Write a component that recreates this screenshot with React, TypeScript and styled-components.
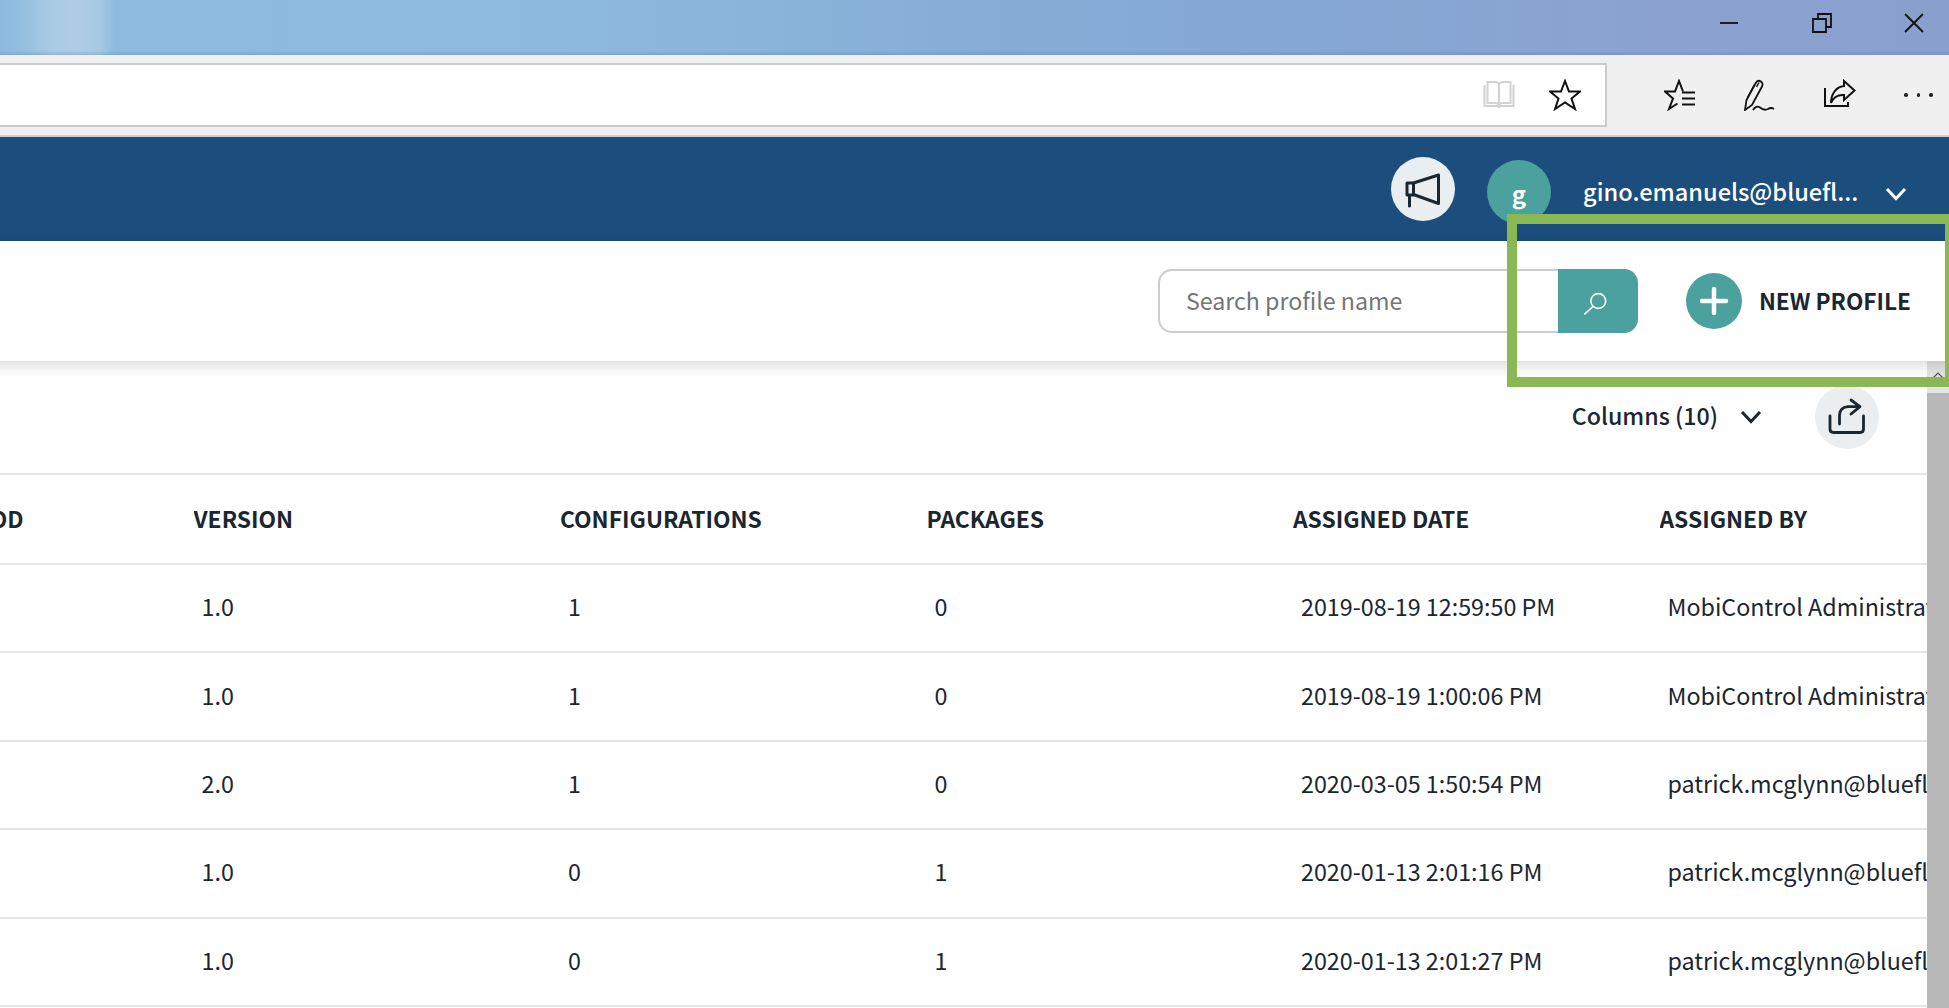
import styled, {createGlobalStyle} from "styled-components";

const GlobalStyle = createGlobalStyle`
  html, body {
    margin: 0;
    padding: 0;
    background: #fff;
    overflow: hidden;
  }
  * {
    box-sizing: border-box;
  }
`

const Page = styled.div`
  position: relative;
  width: 1949px;
  height: 1008px;
  display: flex;
  flex-direction: column;
  overflow: hidden;
  font-family: "Noto Sans CJK SC", "Noto Sans", sans-serif;
  color: #1a2630;
`

const TitleBar = styled.div`
  height: 55px;
  flex: none;
  display: flex;
  justify-content: flex-end;
  align-items: flex-start;
  gap: 72px;
  padding: 13px 25px 0 0;
  background:
    linear-gradient(180deg, rgba(255,255,255,0) 92%, rgba(70,110,160,.25) 100%),
    linear-gradient(90deg, #8dbbdd 0, #93bfdf 23px, #a9cbe4 50px, #aecde5 78px, #a6c9e3 100px, #8cbbde 114px, #8db9dc 600px, #86acd6 1000px, #85a8d4 1300px, #8ba2d0 1650px, #899fce 1949px);
`

const WindowIcon = styled.svg`
  width: 20px;
  height: 20px;
  fill: none;
  stroke: #111;
  stroke-width: 1.8;
`

const Toolbar = styled.div`
  height: 82px;
  flex: none;
  display: flex;
  background: #f0f0f0;
  border-bottom: 2px solid #cfcfcf;
  padding-top: 8px;
`

const AddressBar = styled.div`
  width: 1607px;
  height: 64px;
  flex: none;
  display: flex;
  justify-content: flex-end;
  align-items: center;
  gap: 34px;
  padding-right: 24px;
  background: #fff;
  border: 2px solid #cbcbcb;
  border-left: none;
`

const ToolIcon = styled.svg<{$gray?: boolean}>`
  width: 32px;
  height: 32px;
  flex: none;
  fill: none;
  stroke: ${(props) => (props.$gray ? "#d2d2d2" : "#111")};
  stroke-width: 2;
`

const ToolGroup = styled.div`
  display: flex;
  align-items: center;
  height: 64px;
  margin-left: 57px;
  gap: 48px;
`

const Dots = styled.div`
  display: flex;
  gap: 9px;

  span {
    width: 3.5px;
    height: 3.5px;
    background: #222;
    border-radius: 50%;
  }
`

const TopNav = styled.div`
  height: 104px;
  flex: none;
  display: flex;
  justify-content: flex-end;
  align-items: center;
  padding: 6px 42px 0 0;
  background: #1c4e7d;
`

const Megaphone = styled.div`
  width: 64px;
  height: 64px;
  border-radius: 50%;
  background: #ebeef0;
  margin-top: -6px;
`

const Avatar = styled.div`
  width: 64px;
  height: 64px;
  margin-left: 32px;
  padding-top: 2px;
  border-radius: 50%;
  background: #4aa19e;
  color: #fff;
  font-size: 24px;
  font-weight: 700;
  display: flex;
  align-items: center;
  justify-content: center;
`

const UserName = styled.div`
  width: 274px;
  margin: -2px 0 0 32px;
  white-space: nowrap;
  color: #fff;
  font-size: 23.6px;
  font-weight: 500;
`

const Chevron = styled.svg<{$light?: boolean}>`
  width: 22px;
  height: 14px;
  flex: none;
  fill: none;
  stroke: ${(props) => (props.$light ? "#fff" : "#1a2630")};
  stroke-width: 3;
`

const NavChevron = styled(Chevron)`
  margin: 4px 0 0 28px;
`

const SubHeader = styled.div`
  position: relative;
  z-index: 1;
  height: 120px;
  flex: none;
  display: flex;
  justify-content: flex-end;
  align-items: center;
  margin: 0 -20px;
  padding-right: 58px;
  background: #fff;
  box-shadow: 0 4px 14px rgba(0, 0, 0, .16);
`

const SearchInput = styled.input`
  width: 400px;
  height: 64px;
  padding: 0 26px 2px;
  border: 2px solid #cdcdcd;
  border-right: none;
  border-radius: 14px 0 0 14px;
  outline: none;
  font: 400 23.2px "Noto Sans CJK SC", "Noto Sans", sans-serif;
  color: #1a2630;

  &::placeholder {
    color: #757575;
    opacity: 1;
  }
`

const SearchButton = styled.div`
  width: 80px;
  height: 64px;
  display: flex;
  align-items: center;
  justify-content: center;
  background: #4aa19e;
  border-radius: 0 14px 14px 0;
`

const NewButton = styled.div`
  display: flex;
  align-items: center;
  margin-left: 48px;
  gap: 17px;
  font-size: 22.6px;
  font-weight: 600;
  white-space: nowrap;
`

const NewLabel = styled.span`
  margin-bottom: 2px;
`

const PlusCircle = styled.div`
  width: 56px;
  height: 56px;
  border-radius: 50%;
  background: #4aa19e;
  display: flex;
  align-items: center;
  justify-content: center;
`

const Body = styled.div`
  flex: 1;
  display: flex;
  min-height: 0;
`

const Main = styled.div`
  flex: 1;
  min-width: 0;
  overflow: hidden;
`

const ColumnsBar = styled.div`
  height: 112px;
  display: flex;
  justify-content: flex-end;
  align-items: center;
  padding-right: 48px;
  font-size: 23.2px;
  font-weight: 500;
`

const ColumnsLabel = styled.div`
  display: flex;
  align-items: center;
  gap: 22px;
  margin-right: 53px;
`

const ColumnsText = styled.span`
  margin-bottom: 4px;
`

const ExportButton = styled.div`
  width: 64px;
  height: 64px;
  border-radius: 50%;
  background: #ebeef0;
`

const Table = styled.div`
  width: 2566px;
  margin-left: -173px;
  border-top: 2px solid #e3e7ea;
`

const Row = styled.div<{$head?: boolean}>`
  display: grid;
  grid-template-columns: repeat(7, 366.5px);
  align-items: center;
  height: ${(props) => (props.$head ? "90px" : "88.4px")};
  border-bottom: 2px solid #e3e7ea;
`

const HeadCell = styled.div`
  padding-bottom: 1px;
  font-size: 22.8px;
  font-weight: 600;
  white-space: nowrap;
  overflow: hidden;
`

const Cell = styled.div`
  padding: 0 0 4px 8px;
  font-size: 23.3px;
  white-space: nowrap;
  overflow: hidden;
`

const Scrollbar = styled.div`
  width: 22px;
  flex: none;
  display: flex;
  flex-direction: column;
  background: #b8b8b8;
`

const ScrollUp = styled.div`
  height: 32px;
  display: flex;
  align-items: flex-end;
  justify-content: center;
  padding-bottom: 14px;
  background: #e4e4e4;
`

const GreenFrame = styled.div`
  position: absolute;
  z-index: 2;
  left: 1507px;
  top: 214px;
  width: 442px;
  height: 173px;
  border: solid #8ab855;
  border-width: 10px 4px 10px 10px;
  pointer-events: none;
`

const columns = ["INSTALL METHOD", "VERSION", "CONFIGURATIONS", "PACKAGES", "ASSIGNED DATE", "ASSIGNED BY"];

const rows = [
	["1.0", "1", "0", "2019-08-19 12:59:50 PM", "MobiControl Administrator"],
	["1.0", "1", "0", "2019-08-19 1:00:06 PM", "MobiControl Administrator"],
	["2.0", "1", "0", "2020-03-05 1:50:54 PM", "patrick.mcglynn@bluefletch.com"],
	["1.0", "0", "1", "2020-01-13 2:01:16 PM", "patrick.mcglynn@bluefletch.com"],
	["1.0", "0", "1", "2020-01-13 2:01:27 PM", "patrick.mcglynn@bluefletch.com"],
];

const starPoints = "16,2 20,12.5 31,12.5 22.5,19.5 26,30 16,23.5 6,30 9.5,19.5 1,12.5 12,12.5";

export default function App() {
	return (
		<Page>
			<GlobalStyle/>
			<TitleBar>
				<WindowIcon viewBox="0 0 20 20"><path d="M0 10H18"/></WindowIcon>
				<WindowIcon viewBox="0 0 20 20"><path d="M1 6H14V19H1Z M6 6V1H19V14H14"/></WindowIcon>
				<WindowIcon viewBox="0 0 20 20"><path d="M1 1L19 19M19 1L1 19"/></WindowIcon>
			</TitleBar>
			<Toolbar>
				<AddressBar>
					<ToolIcon $gray viewBox="0 0 32 32">
						<path d="M1.5 6V27H14.5Q16 27 16 29Q16 27 17.5 27H30.5V6"/>
						<path d="M4.5 4V24H12Q16 24 16 27V5Q15 3 11 3H4.5Z M27.5 4V24H20Q16 24 16 27V5Q17 3 21 3H27.5Z"/>
					</ToolIcon>
					<ToolIcon viewBox="0 0 32 32"><polygon points={starPoints}/></ToolIcon>
				</AddressBar>
				<ToolGroup>
					<ToolIcon viewBox="0 0 32 32">
						<path d="M19 12.5L15 2L11 12.5H1L9 19.5L5 30L13.5 24.5"/>
						<path d="M18 13.5H31M18 19.5H31M18 25.5H31"/>
					</ToolIcon>
					<ToolIcon viewBox="0 0 32 32">
						<path d="M1 31L2.5 21L12 3.5Q14 0.5 17 2.5Q19.5 4.5 18 7.5L8 26Z" strokeWidth="1.8"/>
						<path d="M10.5 5.5L3.5 18.5M15 3.5L12.5 8" strokeWidth="1.5"/>
						<path d="M9 31Q12 26 16 28.5Q20 32 24 30Q27 28 30 30" strokeWidth="1.8"/>
					</ToolIcon>
					<ToolIcon viewBox="0 0 32 32">
						<path d="M1 9V27H24V23"/>
						<path d="M20 2L30.5 11.5L20 21V16C13 15.5 9 19 7 24C7 15 12 8 20 7Z"/>
					</ToolIcon>
					<Dots><span/><span/><span/></Dots>
				</ToolGroup>
			</Toolbar>
			<TopNav>
				<Megaphone>
					<svg width="64" height="64" viewBox="0 0 64 64" fill="none" stroke="#1a2630" strokeWidth="3" strokeLinejoin="round" strokeLinecap="round">
						<path d="M22.5 26L47.5 18V46.5L22.5 37.5Z"/>
						<path d="M22.5 26H16V38H22.5M18.5 38V49"/>
					</svg>
				</Megaphone>
				<Avatar>g</Avatar>
				<UserName>gino.emanuels@bluefl...</UserName>
				<NavChevron $light viewBox="0 0 22 14"><path d="M2 2L11 11.5L20 2"/></NavChevron>
			</TopNav>
			<SubHeader>
				<SearchInput placeholder="Search profile name" readOnly/>
				<SearchButton>
					<svg width="28" height="28" viewBox="0 0 28 28" fill="none" stroke="#fff" strokeWidth="1.6" strokeLinecap="round">
						<circle cx="14.3" cy="14" r="7.4"/>
						<path d="M9 19.5L0.8 27"/>
					</svg>
				</SearchButton>
				<NewButton>
					<PlusCircle>
						<svg width="30" height="30" viewBox="0 0 30 30" fill="none" stroke="#fff" strokeWidth="4.5" strokeLinecap="round">
							<path d="M15 3V27M3 15H27"/>
						</svg>
					</PlusCircle>
					<NewLabel>NEW PROFILE</NewLabel>
				</NewButton>
			</SubHeader>
			<Body>
				<Main>
					<ColumnsBar>
						<ColumnsLabel>
							<ColumnsText>Columns (10)</ColumnsText>
							<Chevron viewBox="0 0 22 14"><path d="M2 2L11 11.5L20 2"/></Chevron>
						</ColumnsLabel>
						<ExportButton>
							<svg width="64" height="64" viewBox="0 0 64 64" fill="none" stroke="#1a2630" strokeWidth="2.8" strokeLinecap="round" strokeLinejoin="round">
								<path d="M15 31V44Q15 47.5 18.5 47.5H45Q48.5 47.5 48.5 44V31"/>
								<path d="M24.5 39V30C24.5 25 28 21.6 33 21.6H45M36 15L45 21.6L36 29"/>
							</svg>
						</ExportButton>
					</ColumnsBar>
					<Table>
						<Row $head>
							{columns.map((name: string) => <HeadCell key={name}>{name}</HeadCell>)}
						</Row>
						{rows.map((row: string[], i: number) => (
							<Row key={i}>
								<Cell/>
								{row.map((value: string, j: number) => <Cell key={j}>{value}</Cell>)}
							</Row>
						))}
					</Table>
				</Main>
				<Scrollbar>
					<ScrollUp>
						<svg width="12" height="7" viewBox="0 0 12 7" fill="none" stroke="#555" strokeWidth="1.2"><path d="M1 6L6 1L11 6"/></svg>
					</ScrollUp>
				</Scrollbar>
			</Body>
			<GreenFrame/>
		</Page>
	)
}
